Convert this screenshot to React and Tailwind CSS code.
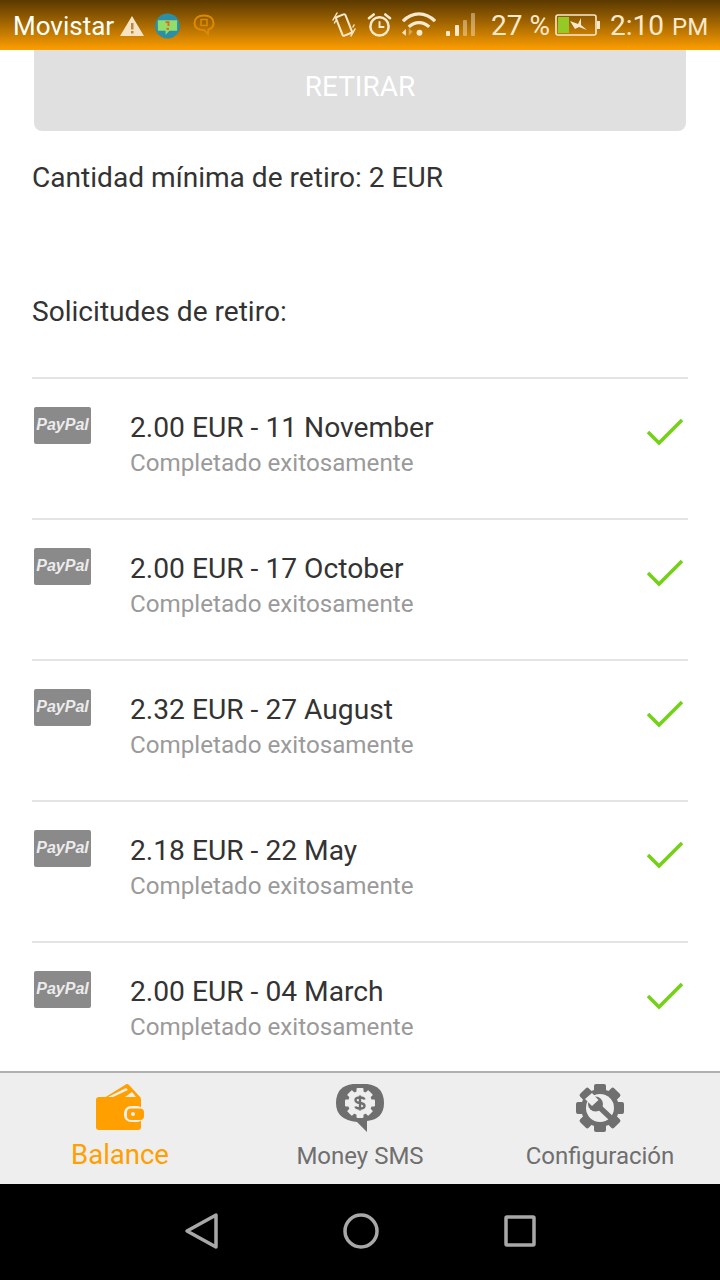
const withdrawals = [
  { title: '2.00 EUR - 11 November' },
  { title: '2.00 EUR - 17 October' },
  { title: '2.32 EUR - 27 August' },
  { title: '2.18 EUR - 22 May' },
  { title: '2.00 EUR - 04 March' },
]

function StatusBar() {
  return (
    <div className="h-[50px] shrink-0 flex items-center pl-[13px] bg-gradient-to-b from-[#5a3900] to-[#ff9f00] text-[#fbe9cd] whitespace-nowrap">
      <span className="w-[100px] text-[26px] leading-none text-white mt-[2px]">Movistar</span>
      <svg className="ml-[7px] mt-[1px]" width="24" height="22" viewBox="0 0 24 22">
        <path d="M12 1 L24 21 H0 Z" fill="#f6e3c5" />
        <rect x="11" y="8" width="2.5" height="6.5" fill="#b98a3d" />
        <rect x="11" y="16" width="2.5" height="2.5" fill="#b98a3d" />
      </svg>
      <svg className="ml-[11px] mt-[1px]" width="25" height="26" viewBox="0 0 26 26">
        <circle cx="13" cy="13" r="13" fill="#2b8fa8" />
        <path d="M3 7 H23 V18 H15 L11 22 V18 H3 Z" fill="#93de6a" />
        <rect x="11" y="8" width="4" height="2" fill="#e8641b" />
        <rect x="13" y="10" width="2" height="3" fill="#e8641b" />
        <rect x="12" y="15" width="2.5" height="2" fill="#e8641b" />
      </svg>
      <svg className="ml-[13px] -mt-[1px]" width="22" height="22" viewBox="0 0 22 22" fill="none" stroke="#de8a00" strokeWidth="2">
        <path d="M11 1.5 C5 1.5 1.5 4.5 1.5 9 C1.5 13.5 5 16 11 16 L15 20 L15.5 15.5 C18.5 14.5 20.5 12.5 20.5 9 C20.5 4.5 17 1.5 11 1.5 Z" />
        <rect x="8" y="5.5" width="6" height="6" strokeWidth="1.5" />
      </svg>
      <svg className="ml-[117px]" width="24" height="26" viewBox="0 0 24 26" fill="none" stroke="#fbe9cd" strokeLinecap="round">
        <rect x="7" y="3" width="10" height="20" rx="1.5" strokeWidth="2" transform="rotate(-22 12 13)" />
        <path d="M5 1 L1 8 M3.5 9 L2.5 11 M19 24 L23 17 M21 15 L22 13" strokeWidth="1.5" />
      </svg>
      <svg className="ml-[11px] -mt-[1px]" width="25" height="26" viewBox="0 0 26 26" fill="none" stroke="#fbe9cd" strokeWidth="2.6">
        <circle cx="13" cy="14.5" r="9.5" />
        <path d="M13 9 V15 H18" strokeWidth="2" />
        <path d="M2 6 L7 2 M24 6 L19 2" strokeLinecap="round" />
      </svg>
      <svg className="ml-[9px]" width="35" height="26" viewBox="0 0 36 26" fill="none" stroke="#fbe9cd" strokeWidth="3.4">
        <path d="M2 9 C12 -1 25 -1 35 9" />
        <path d="M8 15 C14 9 23 9 29 15" />
        <circle cx="19" cy="21" r="3" fill="#fbe9cd" stroke="none" />
        <path d="M5 17 L1 21 L5 24 Z" fill="#fbe9cd" stroke="none" />
        <path d="M8 16 L12 20 L8 24 Z" fill="#fbe9cd" fillOpacity="0.4" stroke="none" />
      </svg>
      <svg className="ml-[10px]" width="30" height="26" viewBox="0 0 30 26">
        <rect x="0" y="19" width="4" height="5" rx="1" fill="#fbe9cd" />
        <rect x="9" y="13" width="4" height="11" rx="1" fill="#fbe9cd" />
        <rect x="17" y="8" width="4" height="16" rx="1" fill="#fbe9cd" fillOpacity="0.45" />
        <rect x="25" y="1" width="4" height="23" rx="1" fill="#fbe9cd" fillOpacity="0.45" />
      </svg>
      <span className="ml-[15px] w-[64px] text-[28px] leading-none mt-[2px]">27 %</span>
      <svg width="46" height="24" viewBox="0 0 46 24">
        <rect x="1" y="2" width="40" height="20" rx="2" fill="none" stroke="#fbe9cd" strokeWidth="1.6" />
        <rect x="3" y="4" width="11" height="16" fill="#95c926" />
        <rect x="42" y="8" width="3" height="8" fill="#fbe9cd" />
        <path d="M15 8 L23 11 L26 5 L26 12 L32 17 L24 14 L20 16 Z" fill="#fbe9cd" />
      </svg>
      <span className="ml-[9px] text-[28px] leading-none mt-[2px]">2:10</span>
      <span className="ml-[8px] text-[24px] leading-none mt-[3px]">PM</span>
    </div>
  )
}

function WithdrawalRow({ item }) {
  return (
    <div className="h-[141px] border-t-2 border-[#e4e4e4] flex pl-[2px] pr-[5px]">
      <div className="mt-[28px] w-[57px] h-[37px] bg-[#8a8a8a] rounded-[2px] flex items-center justify-center font-['Liberation_Sans',sans-serif] italic font-bold text-[16px] leading-none text-[#ececec] pb-[2px]">
        PayPal
      </div>
      <div className="ml-[39px] flex-1">
        <div className="mt-[31px] text-[28.2px] leading-[36px] text-[#333333]">{item.title}</div>
        <div className="mt-[1px] text-[24.2px] leading-[32px] text-[#9a9a9a]">Completado exitosamente</div>
      </div>
      <svg className="mt-[39px]" width="36" height="28" viewBox="0 0 36 28" fill="none" stroke="#73d216" strokeWidth="3.5">
        <path d="M1 14 L12 25 L35 2" />
      </svg>
    </div>
  )
}

function TabItem({ label, active, children }) {
  return (
    <div className="flex-1 flex flex-col items-center">
      <div className="h-[52px] mt-[9px] flex items-center justify-center">{children}</div>
      <div className={active ? 'mt-[3px] text-[27.5px] leading-[36px] text-[#ff9f00]' : 'mt-[4px] text-[24px] leading-[36px] text-[#6f6f6f]'}>
        {label}
      </div>
    </div>
  )
}

export default function App() {
  return (
    <div className="w-[720px] h-[1280px] flex flex-col overflow-hidden bg-white font-['Roboto',sans-serif]">
      <StatusBar />

      <div className="flex-1 overflow-hidden px-[32px]">
        <div className="mx-[2px] h-[81px] pb-[7px] bg-[#e0e0e0] rounded-b-[8px] flex items-center justify-center text-[28px] text-white">
          RETIRAR
        </div>
        <p className="mt-[29px] text-[28.1px] leading-[36px] text-[#333333]">Cantidad mínima de retiro: 2 EUR</p>
        <p className="mt-[98px] text-[28.1px] leading-[36px] text-[#333333]">Solicitudes de retiro:</p>
        <div className="mt-[47px]">
          {withdrawals.map((item) => (
            <WithdrawalRow key={item.title} item={item} />
          ))}
        </div>
      </div>

      <div className="h-[113px] shrink-0 border-t-2 border-[#b0b0b0] bg-[#eeeeee] flex">
        <TabItem label="Balance" active>
          <svg width="48" height="48" viewBox="0 0 48 48">
            <path d="M8 14 L29 1 Q31 -1 33 1 L45 14 Z" fill="#ff9f00" />
            <path d="M12 13 L30 4 L32 6 L17 13 Z" fill="#eeeeee" />
            <path d="M29 13 L36 8 L40 13 Z" fill="#eeeeee" />
            <rect x="0" y="13" width="45" height="33" rx="3" fill="#ff9f00" />
            <rect x="28" y="22" width="20" height="16" rx="7" fill="#eeeeee" />
            <rect x="31" y="24.5" width="17" height="11.5" rx="4" fill="#ff9f00" />
            <circle cx="37" cy="30" r="2" fill="#eeeeee" />
          </svg>
        </TabItem>
        <TabItem label="Money SMS">
          <svg width="48" height="48" viewBox="0 0 48 48">
            <path d="M17 0 H31 Q48 2 48 19 Q48 35 31 37 L31 48 L21 38 Q0 36 0 19 Q0 2 17 0 Z" fill="#6f6f6f" />
            <circle cx="24" cy="19" r="12" fill="#eeeeee" />
            <g fill="#eeeeee">
              <rect x="20.5" y="4" width="7" height="30" rx="1" />
              <rect x="20.5" y="4" width="7" height="30" rx="1" transform="rotate(45 24 19)" />
              <rect x="20.5" y="4" width="7" height="30" rx="1" transform="rotate(90 24 19)" />
              <rect x="20.5" y="4" width="7" height="30" rx="1" transform="rotate(135 24 19)" />
            </g>
            <path d="M28.5 15.5 Q28 13.5 24 13.5 Q19.5 13.5 19.5 16 Q19.5 18.5 24 19 Q28.5 19.5 28.5 22 Q28.5 24.5 24 24.5 Q20 24.5 19.5 22.5 M24 11.5 V26.5" fill="none" stroke="#6f6f6f" strokeWidth="2.4" />
          </svg>
        </TabItem>
        <TabItem label="Configuración">
          <svg width="48" height="48" viewBox="0 0 48 48">
            <g fill="#6f6f6f">
              <rect x="18" y="0" width="12" height="48" rx="2" />
              <rect x="18" y="0" width="12" height="48" rx="2" transform="rotate(45 24 24)" />
              <rect x="18" y="0" width="12" height="48" rx="2" transform="rotate(90 24 24)" />
              <rect x="18" y="0" width="12" height="48" rx="2" transform="rotate(135 24 24)" />
            </g>
            <circle cx="24" cy="24" r="19" fill="#6f6f6f" />
            <circle cx="24" cy="24" r="14" fill="#eeeeee" />
            <path d="M20 20 L37 36" stroke="#6f6f6f" strokeWidth="5.5" fill="none" />
            <circle cx="19.5" cy="20" r="7.5" fill="#6f6f6f" />
            <path d="M16 9 L22.5 16 L16 22 L9 15 Z" fill="#eeeeee" />
          </svg>
        </TabItem>
      </div>

      <div className="h-[96px] shrink-0 bg-black flex items-center justify-center pb-[2px]">
        <svg width="36" height="38" viewBox="0 0 36 38" fill="none" stroke="#a8a8a8" strokeWidth="3.5" strokeLinejoin="round" className="mr-[123px]">
          <path d="M32 3 V35 L3 19 Z" />
        </svg>
        <svg width="36" height="36" viewBox="0 0 36 36" fill="none" stroke="#a8a8a8" strokeWidth="3.5" className="mr-[125px]">
          <circle cx="18" cy="18" r="16" />
        </svg>
        <svg width="32" height="32" viewBox="0 0 32 32" fill="none" stroke="#a8a8a8" strokeWidth="3.5" strokeLinejoin="round">
          <rect x="2" y="2" width="28" height="28" rx="1" />
        </svg>
      </div>
    </div>
  )
}
